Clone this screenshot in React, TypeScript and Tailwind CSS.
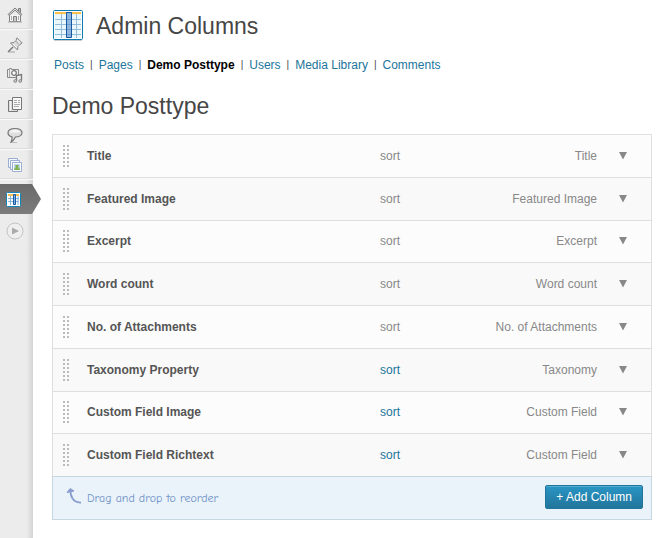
import React from "react";

type Column = { label: string; type: string; sortable: boolean };

const columns: Column[] = [
  { label: "Title", type: "Title", sortable: false },
  { label: "Featured Image", type: "Featured Image", sortable: false },
  { label: "Excerpt", type: "Excerpt", sortable: false },
  { label: "Word count", type: "Word count", sortable: false },
  { label: "No. of Attachments", type: "No. of Attachments", sortable: false },
  { label: "Taxonomy Property", type: "Taxonomy", sortable: true },
  { label: "Custom Field Image", type: "Custom Field", sortable: true },
  { label: "Custom Field Richtext", type: "Custom Field", sortable: true },
];

const tabs = ["Posts", "Pages", "Demo Posttype", "Users", "Media Library", "Comments"];

function HomeIcon() {
  return (
    <svg width="16" height="16" viewBox="0 0 16 16" fill="none" stroke="#808080" aria-hidden="true">
      <path d="M2.5 8v6.5h11V8" fill="#f6f6f6" />
      <path d="M11.5 1.5h2v4h-2z" fill="#bbb" />
      <path d="M8 1 15 7.5l-1 1L8 3.2 2 8.500l-1-1z" fill="#ddd" />
      <path d="M6.500 14V9.500h3V14" fill="#ccc" />
      <path d="M4.500 9v4M11.500 9v4" stroke="#aaa" />
      <path d="M1 15h14" stroke="#aaa" />
    </svg>
  );
}

function PinIcon() {
  return (
    <svg width="16" height="16" viewBox="0 0 16 16" fill="none" stroke="#888" aria-hidden="true">
      <path d="M2 15h6" stroke="#bbb" strokeWidth="1.500" />
      <path d="M6 10 1 15" stroke="#777" strokeWidth="1.500" />
      <path d="M10 .8 15.200 6 13 7.500 11 9.500 10.500 13 3.500 6l3.500-.5L9 3.500z" fill="#ddd" />
      <path d="M8.500 4 12 7.500" stroke="#999" />
      <path d="M6 7l4 4" stroke="#f5f5f5" />
      <path d="M10.500 3 13 5.500" stroke="#f5f5f5" />
    </svg>
  );
}

function MediaIcon() {
  return (
    <svg width="16" height="16" viewBox="0 0 16 16" fill="none" stroke="#888" aria-hidden="true">
      <path d="M.500 2.500h2v-1h2v1h7v8H.500z" fill="#eee" />
      <path d="M2.500 3v7" stroke="#aaa" />
      <circle cx="7" cy="6" r="2.300" fill="#fff" stroke="#777" strokeWidth="1.300" />
      <path d="M9.500 14V8.500l5-1V13" fill="#ececec" stroke="#777" strokeWidth="1.300" />
      <circle cx="8.300" cy="14" r="1.400" fill="#ccc" />
      <circle cx="13.300" cy="14" r="1.400" fill="#ccc" />
    </svg>
  );
}

function PagesIcon() {
  return (
    <svg width="16" height="16" viewBox="0 0 16 16" fill="none" stroke="#777" aria-hidden="true">
      <path d="M1.500 3.500h9v11h-9z" fill="#ddd" />
      <path d="M3.500 4v10" stroke="#f2f2f2" />
      <path d="M5.500.5h9v12h-9z" fill="#f8f8f8" />
      <path d="M7 3.500h3M11 3.500h2M7 5.500h3M11 5.500h2M7 7.500h6M7 9.500h5" stroke="#aaa" />
    </svg>
  );
}

function CommentIcon() {
  return (
    <svg width="16" height="16" viewBox="0 0 16 16" fill="none" stroke="#777" aria-hidden="true">
      <path d="M4 15.500h6" stroke="#bbb" />
      <path
        d="M8 1.500c4 0 7 1.500 7 4.200s-3 4.300-6.500 4.300c-1 2-2 3.800-4.500 5 .8-1.500 1.300-3.200 1-5.200C2.500 9.200 1 8 1 5.700c0-2.700 3-4.200 7-4.200z"
        fill="#dedede"
        strokeWidth="1.200"
      />
      <path d="M3.500 5C6 2.700 10 2.700 12.500 5z" fill="#f6f6f6" stroke="#f6f6f6" />
    </svg>
  );
}

function GalleryIcon() {
  return (
    <svg width="16" height="16" viewBox="0 0 16 16" fill="none" stroke="#9aafd4" aria-hidden="true">
      <path d="M1.500 1.500h9v9h-9z" fill="#f5f8fd" />
      <path d="M3.500 3.500h9v9h-9z" fill="#f5f8fd" />
      <path d="M5.500 5.500h9v9h-9z" fill="#fff" />
      <path d="M7 7h6v6H7z" fill="#b9d5ef" stroke="none" />
      <path d="M7 11.500h6V13H7zM8.500 8h3v3.500h-3z" fill="#80b24f" stroke="none" />
    </svg>
  );
}

function ColumnsIcon({ small = false }: { small?: boolean }) {
  if (small) {
    return (
      <svg width="15" height="15" viewBox="0 0 15 15" aria-hidden="true">
        <rect x=".5" y=".5" width="14" height="14" rx="1" fill="#fff" stroke="#1783bb" />
        <path d="M2 2h11v2H2z" fill="#fcc04e" />
        <path d="M2 6.500h11M2 9.500h11M4.500 4v9M12 4v9" stroke="#84b3d8" />
        <path d="M7.500 2.500h2v10h-2z" fill="#80aede" stroke="#1559a5" />
      </svg>
    );
  }
  return (
    <svg width="30" height="32" viewBox="0 0 30 32" aria-hidden="true">
      <path d="M1 30.500h28" stroke="#ccc" />
      <rect x=".5" y=".5" width="29" height="29" rx="1" fill="#fff" stroke="#0e7ab2" />
      <path d="M2 4h26v24H2z" fill="#eaf7fd" />
      <path d="M2 2h26v2H2z" fill="#fcbf4b" />
      <path
        d="M2 9.500h26M2 14.500h26M2 19.500h26M2 24.500h26M8.500 4v24M23.500 4v24"
        stroke="#96bcdc"
      />
      <path d="M13.500 2.500h5v25h-5z" fill="#8fb6df" stroke="#1559a5" />
      <path d="M14 9.500h4M14 14.500h4M14 19.500h4M14 24.500h4" stroke="#6c9bcd" />
    </svg>
  );
}

function PlayIcon() {
  return (
    <svg width="18" height="18" viewBox="0 0 18 18" aria-hidden="true">
      <circle cx="9" cy="9" r="8" fill="#efefef" stroke="#c4c4c4" />
      <path d="M6 5.500v7L13 9z" fill="#aaa" />
    </svg>
  );
}

function Grip() {
  const rows = [0, 4, 8, 12, 16, 20];
  return (
    <svg width="6" height="22" viewBox="0 0 6 22" fill="#bbb" shapeRendering="crispEdges" aria-hidden="true">
      {rows.map((y) => (
        <React.Fragment key={y}>
          <rect x="0" y={y} width="2" height="2" />
          <rect x="4" y={y} width="2" height="2" />
        </React.Fragment>
      ))}
    </svg>
  );
}

const menu = [
  { name: "Dashboard", icon: <HomeIcon /> },
  { name: "Posts", icon: <PinIcon /> },
  { name: "Media", icon: <MediaIcon /> },
  { name: "Pages", icon: <PagesIcon /> },
  { name: "Comments", icon: <CommentIcon /> },
  { name: "Gallery", icon: <GalleryIcon /> },
];

function Sidebar() {
  return (
    <nav
      aria-label="Admin menu"
      className="w-[33px] shrink-0 bg-linear-to-r from-[#ececec] from-80% to-[#d4d4d4]"
    >
      {menu.map((item) => (
        <a
          key={item.name}
          href="#"
          aria-label={item.name}
          className="flex h-[30px] items-center border-b border-b-[#f9f9f9] pl-[7px] shadow-[inset_0_-1px_0_#dcdcdc]"
        >
          {item.icon}
        </a>
      ))}
      <a
        href="#"
        aria-label="Admin Columns"
        aria-current="page"
        className="mt-1 flex h-[30px] w-[41px] items-center bg-linear-to-b from-[#6a6a6a] to-[#7c7c7c] pl-[6px] [clip-path:polygon(0_0,32px_0,100%_50%,32px_100%,0_100%)]"
      >
        <ColumnsIcon small />
      </a>
      <button type="button" aria-label="Expand menu" className="mt-2 ml-[6px] block">
        <PlayIcon />
      </button>
    </nav>
  );
}

function ColumnRow({ column }: { column: Column }) {
  return (
    <li className="flex items-center border-t border-[#dfdfdf] pr-6 pl-[10px] text-[#888] odd:bg-[#fcfcfc] even:bg-[#f9f9f9]">
      <Grip />
      <span className="ml-[18px] w-[293px] shrink-0 font-bold text-[#555]">{column.label}</span>
      {column.sortable ? (
        <a href="#" className="text-[#21759b]">
          sort
        </a>
      ) : (
        <span>sort</span>
      )}
      <span className="ml-auto">{column.type}</span>
      <button type="button" aria-label={`Edit ${column.label}`} className="ml-[22px]">
        <svg width="8" height="8" viewBox="0 0 8 8" fill="#888" aria-hidden="true">
          <path d="M0 0h8L4 7.500z" />
        </svg>
      </button>
    </li>
  );
}

export default function App() {
  return (
    <div className="flex min-h-screen bg-white font-['Liberation_Sans',Arial,sans-serif] text-xs text-[#464646]">
      <Sidebar />
      <main className="min-w-0 flex-1 pt-[10px] pr-[18px] pb-[18px] pl-[19px]">
        <header className="flex h-8 items-center gap-[13px] pl-px">
          <ColumnsIcon />
          <h1 className="text-[23px] leading-8">Admin Columns</h1>
        </header>

        <nav aria-label="Post types" className="mt-[15px] flex h-4 items-center gap-1.5 pl-0.5">
          {tabs.map((tab, i) => (
            <React.Fragment key={tab}>
              {i > 0 && <span className="text-[10px] text-[#464646]">|</span>}
              <a
                href="#"
                className={tab === "Demo Posttype" ? "font-bold text-black" : "text-[#21759b]"}
              >
                {tab}
              </a>
            </React.Fragment>
          ))}
        </nav>

        <h2 className="mt-[17px] text-[23px] leading-8">Demo Posttype</h2>

        <section className="mt-3 border-x border-[#dfdfdf]">
          <ul className="grid min-h-[342px] auto-rows-fr">
            {columns.map((column) => (
              <ColumnRow key={column.label} column={column} />
            ))}
          </ul>
          <footer className="-mx-px flex h-11 items-center border border-[#c7d7e2] bg-[#eaf2fa] pr-2 pb-0.5 pl-[13px]">
            <svg width="16" height="20" viewBox="0 0 16 20" fill="none" stroke="#8a9fce" aria-hidden="true">
              <path d="M4.500 2C4 9 7 16 15 15.500" strokeWidth="1.800" />
              <path d="M1 5.500 4.200 1.500 8 4z" fill="#8a9fce" strokeWidth="1" />
            </svg>
            <p className="ml-[5px] pt-0.5 font-['Comic_Neue',Lato,sans-serif] text-[#6f92c6]">
              Drag and drop to reorder
            </p>
            <button
              type="button"
              className="ml-auto h-6 rounded-xs border border-[#21759b] bg-linear-to-b from-[#2a95c5] to-[#21759b] px-2.5 text-white shadow-[inset_0_1px_0_rgba(120,200,230,0.5)]"
            >
              + Add Column
            </button>
          </footer>
        </section>
      </main>
    </div>
  );
}
